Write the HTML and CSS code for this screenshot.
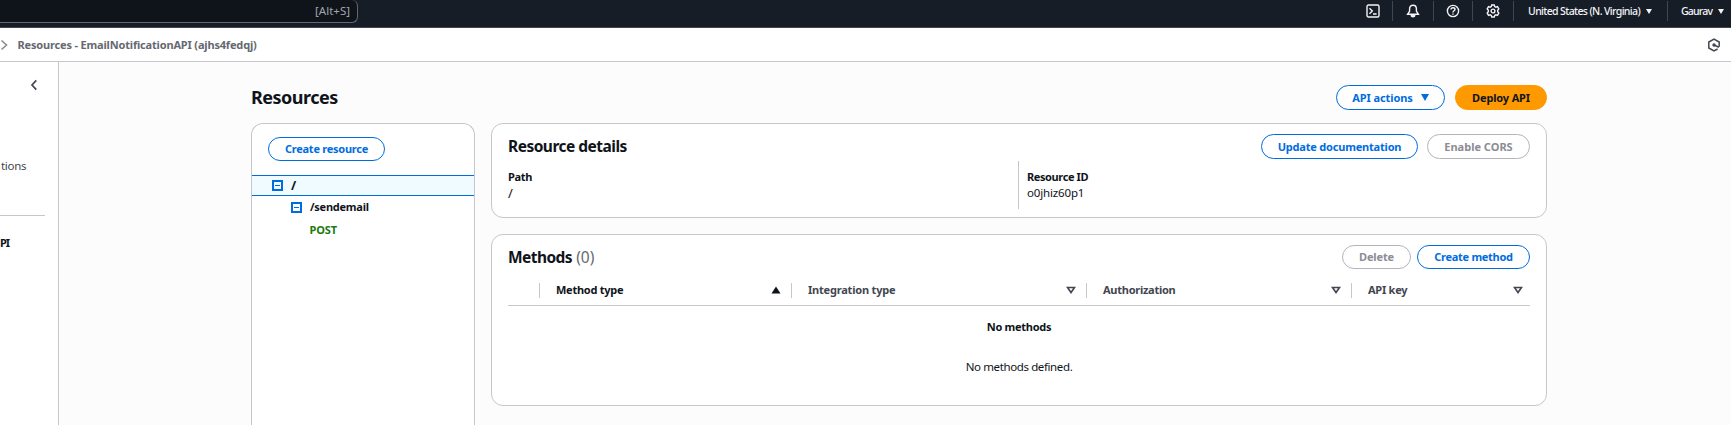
FILE: index.html
```html
<!DOCTYPE html>
<html lang="en">
<head>
<meta charset="utf-8">
<title>API Gateway - Resources</title>
<link rel="stylesheet" href="styles.css">
</head>
<body>
<header class="topbar">
  <div class="search"><span class="t-alt">[Alt+S]</span></div>
  <nav class="tools">
    <span class="tool tool-shell"><svg width="14" height="14" viewBox="0 0 14 14"><rect x="1" y="1" width="12" height="12" rx="1.5"/><path d="M3.500 4.200 6.300 7 3.500 9.800M7 10h3.600"/></svg></span>
    <span class="tool tool-bell"><svg width="14" height="14" viewBox="0 0 14 14"><path d="M7 1.200c-2.200 0-3.400 1.600-3.400 3.600v2.400L1.600 10.200h10.800l-2-3V4.800C10.400 2.800 9.200 1.200 7 1.200z"/><path class="solid" d="M4.600 10.500h4.800v1c0 1.200-1 2-2.400 2s-2.400-.8-2.400-2z"/></svg></span>
    <span class="tool tool-help"><svg width="14" height="14" viewBox="0 0 14 14"><circle cx="7" cy="7" r="5.600"/><path d="M5 5.600c0-1.200.9-1.900 2-1.900s2 .7 2 1.700c0 1.300-2 1.400-2 2.800v.3M7 9.400v1.400"/></svg></span>
    <span class="tool tool-gear"><svg width="14" height="14" viewBox="0 0 14 14"><path d="M5.700 1h2.600l.4 1.600 1.200.6 1.600-.5 1.300 2.200L11.700 6.200v1.600l1.100 1.300-1.300 2.200-1.600-.5-1.200.6-.4 1.600H5.700l-.4-1.600-1.200-.6-1.600.5L1.200 9.100l1.100-1.300V6.200L1.200 4.900l1.300-2.200 1.600.5 1.200-.6z"/><circle cx="7" cy="7" r="1.900"/></svg></span>
    <span class="menu menu-region"><span class="t-region">United States (N. Virginia)</span><i class="caret"></i></span>
    <span class="menu menu-user"><span class="t-user">Gaurav</span><i class="caret"></i></span>
  </nav>
</header>
<div class="crumbs">
  <svg class="chev" width="8" height="12" viewBox="0 0 8 12"><path d="M1.500 1.500 6.500 6l-5 4.500"/></svg>
  <span class="t-crumb">Resources - EmailNotificationAPI (ajhs4fedqj)</span>
  <svg class="hex" width="14" height="14" viewBox="0 0 14 14"><path d="M12.200 8.800V4L7 1 1.800 4v6L7 13l3.600-2"/><circle class="solid" cx="7" cy="7" r="1.700"/><path d="M7.500 7.200 12 9.200"/></svg>
</div>
<div class="layout">
  <aside class="side">
    <svg class="collapse" width="8" height="12" viewBox="0 0 8 12"><path d="M6.300 1.400 2 6l4.300 4.600"/></svg>
    <span class="side-link">tions</span>
    <hr class="side-rule">
    <b class="side-api">PI</b>
  </aside>
  <main class="main">
    <div class="title-row">
      <h1 class="t-title">Resources</h1>
      <div class="actions">
        <button class="btn b-actions"><span class="t-actions">API actions</span><i class="caret-blue"></i></button>
        <button class="btn primary b-deploy"><span class="t-deploy">Deploy API</span></button>
      </div>
    </div>
    <div class="columns">
      <section class="card tree">
        <button class="btn b-resource"><span class="t-resource">Create resource</span></button>
        <div class="node selected"><i class="box"></i><b>/</b></div>
        <div class="node child"><i class="box"></i><b class="t-send">/sendemail</b></div>
        <div class="node post"><b class="t-post">POST</b></div>
      </section>
      <div class="stack">
        <section class="card details">
          <div class="card-head">
            <h2 class="t-details">Resource details</h2>
            <div class="actions"><button class="btn b-update"><span class="t-update">Update documentation</span></button><button class="btn off b-cors"><span class="t-cors">Enable CORS</span></button></div>
          </div>
          <div class="pairs">
            <div class="pair"><b class="t-path">Path</b><span class="slash">/</span></div>
            <div class="pair second"><b class="t-rid">Resource ID</b><span class="t-id">o0jhiz60p1</span></div>
          </div>
        </section>
        <section class="card methods">
          <div class="card-head">
            <h2><span class="t-methods">Methods</span> <span class="count">(0)</span></h2>
            <div class="actions tight"><button class="btn off b-delete"><span class="t-delete">Delete</span></button><button class="btn b-method"><span class="t-method">Create method</span></button></div>
          </div>
          <div class="thead">
            <span class="th"></span>
            <span class="th dark"><span class="t-mtype">Method type</span><svg width="10" height="8" viewBox="0 0 10 8"><path class="solid" d="M.5 7.500 5 .5l4.500 7z"/></svg></span>
            <span class="th"><span class="t-itype">Integration type</span><svg width="10" height="8" viewBox="0 0 10 8"><path d="M1.500 1.500h7L5 6.500z"/></svg></span>
            <span class="th"><span class="t-auth">Authorization</span><svg width="10" height="8" viewBox="0 0 10 8"><path d="M1.500 1.500h7L5 6.500z"/></svg></span>
            <span class="th last"><span class="t-key">API key</span><svg width="10" height="8" viewBox="0 0 10 8"><path d="M1.500 1.500h7L5 6.500z"/></svg></span>
          </div>
          <div class="empty"><b class="t-none">No methods</b><span class="t-nodef">No methods defined.</span></div>
        </section>
      </div>
    </div>
  </main>
</div>
</body>
</html>
```
FILE: styles.css
```css
* { box-sizing: border-box; }
body { margin: 0; width: 1731px; height: 425px; overflow: hidden; background: #fff; color: #0f141a; font: 11.5px/16px "Noto Sans", "Open Sans", sans-serif; }
svg { display: block; fill: none; stroke: currentColor; flex: none; }
span, b { white-space: nowrap; }
h1, h2 { margin: 0; font-weight: 700; white-space: nowrap; }
b { font-size: 11px; font-weight: 700; }

.topbar { display: flex; justify-content: space-between; height: 28px; background: #161d26; border-bottom: 1px solid #424650; color: #f3f3f7; }
.search { width: 358px; height: 23px; padding: 3px 7px 0 0; text-align: right; background: #0f141a; border: solid #656871; border-width: 0 1px 1px 0; border-radius: 0 6px 6px 0; color: #a4a4ad; }
.tools { display: flex; height: 22px; padding-top: 1px; }
.tool, .menu { display: flex; align-items: center; border-left: 1px solid #424650; height: 20px; }
.tool svg { stroke-width: 1.400; }
.tool-shell { width: 26px; border: 0; }
.tool-bell { width: 41px; padding-left: 13px; }
.tool-help { width: 39px; padding-left: 12px; }
.tool-gear { width: 41px; padding-left: 13px; }
.menu { font-size: 10.5px; font-weight: 500; }
.menu-region { width: 154px; padding-left: 14px; }
.menu-user { width: 64px; padding-left: 13px; }
.caret { border: solid transparent; border-width: 5px 3px 0; border-top-color: #f3f3f7; margin-left: 6px; }

.crumbs { display: flex; align-items: center; height: 34px; border-bottom: 1px solid #c6c6cd; color: #656871; font-size: 11px; font-weight: 700; padding: 0 10px 0 0; }
.chev { color: #8c8c94; stroke-width: 1.600; margin-right: 9.5px; }
.hex { margin-left: auto; color: #424650; stroke-width: 1.500; }

.layout { display: flex; height: 363px; }
.side { width: 59px; border-right: 1px solid #c6c6cd; color: #424650; overflow: hidden; }
.collapse { margin: 17px 0 0 30px; stroke-width: 1.700; }
.side-link { display: block; margin: 67px 0 0 1px; letter-spacing: -.3px; }
.side-rule { width: 45px; height: 1px; margin: 41px 0 0; border: 0; background: #c6c6cd; }
.side-api { display: block; width: 20px; margin-top: 19px; color: #0f141a; letter-spacing: -1px; }

.main { flex: 1; background: #fcfcfd; padding: 23px 184px 0 192px; }
.title-row { display: flex; justify-content: space-between; height: 38px; }
.t-title { font-size: 18px; line-height: 24px; }
.actions { display: flex; gap: 10px; }
.tight { gap: 6px; }
.btn { display: flex; align-items: center; justify-content: center; height: 25px; padding: 0; border: 1px solid #006ce0; border-radius: 13px; background: #fff; color: #006ce0; font: 700 11px/16px "Noto Sans", "Open Sans", sans-serif; }
.btn.primary { background: #ff9900; border-color: #ff9900; color: #0f141a; }
.btn.off { border-color: #b4b4bb; color: #8c8c94; }
.b-actions { width: 109px; }
.b-deploy { width: 92px; }
.b-resource { width: 117px; height: 24px; margin-left: 16px; }
.b-update { width: 157px; }
.b-cors { width: 103px; margin-left: -1px; }
.b-delete { width: 69px; height: 24px; }
.b-method { width: 113px; height: 24px; }
.caret-blue { border: solid transparent; border-width: 7px 4.500px 0; border-top-color: #006ce0; margin-left: 8px; }

.columns { display: flex; gap: 16px; }
.card { background: #fff; border: 1px solid #c6c6cd; border-radius: 12px; }
.tree { width: 224px; height: 302px; padding-top: 13px; border-bottom: 0; border-radius: 12px 12px 0 0; }
.node { display: flex; align-items: center; height: 22px; }
.box { display: flex; align-items: center; justify-content: center; width: 11px; height: 11px; border: 2px solid #006ce0; margin-right: 8px; }
.box::after { content: ""; width: 5px; height: 1px; background: #006ce0; }
.selected { height: 21px; margin-top: 14px; padding-left: 20px; background: #f0fbff; border: solid #006ce0; border-width: 1px 0; }
.selected b { font-size: 12.5px; }
.child { padding-left: 39px; }
.post { height: 24px; padding-left: 57.5px; color: #1d7a0c; }

.stack { display: flex; flex-direction: column; gap: 16px; width: 1056px; }
.card-head { display: flex; justify-content: space-between; }
.card h2 { font-size: 15.5px; line-height: 24px; }
.details { height: 95px; padding: 10px 16px; }
.pairs { display: flex; margin-top: 2px; }
.pair { display: flex; flex-direction: column; width: 510px; height: 48px; padding-top: 8px; }
.slash { font-size: 13px; }
.second { border-left: 1px solid #c6c6cd; padding-left: 8px; }
.methods { height: 172px; padding: 10px 16px; }
.count { font-weight: 400; color: #656871; }
.thead { display: grid; grid-template-columns: 31px 252px 295px 265px 179px; height: 37px; padding-top: 14px; border-bottom: 1px solid #c6c6cd; }
.th { display: flex; align-items: center; justify-content: space-between; height: 15px; padding: 0 10px 1px 17px; color: #424650; font-size: 11px; font-weight: 700; }
.th + .th { border-left: 1px solid #c6c6cd; padding-left: 16px; }
.th.last { padding-right: 7px; }
.th svg { stroke-width: 1.600; }
.th.dark { color: #0f141a; }
.solid { fill: currentColor; stroke: none; }
.empty { display: flex; flex-direction: column; align-items: center; gap: 24px; padding-top: 13px; }

/* Tracking per label */
.t-region { letter-spacing: -.62px; }
.t-user { letter-spacing: -.8px; }
.t-crumb { letter-spacing: -.17px; }
.t-title { letter-spacing: -.5px; }
.t-actions { letter-spacing: -.1px; }
.t-deploy { letter-spacing: -.15px; }
.t-resource { letter-spacing: -.25px; }
.t-update { letter-spacing: -.2px; }
.t-delete { letter-spacing: -.15px; }
.t-method { letter-spacing: -.3px; }
.t-send { letter-spacing: -.25px; }
.t-post { letter-spacing: -.1px; }
.t-path { letter-spacing: -.3px; }
.t-rid { letter-spacing: -.4px; }
.t-id { letter-spacing: -.15px; }
.t-details { letter-spacing: -.51px; }
.t-methods { letter-spacing: -.55px; }
.t-mtype { letter-spacing: -.25px; }
.t-itype { letter-spacing: -.2px; }
.t-auth { letter-spacing: -.26px; }
.t-key { letter-spacing: -.25px; }
.t-none { letter-spacing: -.28px; }
.t-nodef { letter-spacing: -.38px; }
```
